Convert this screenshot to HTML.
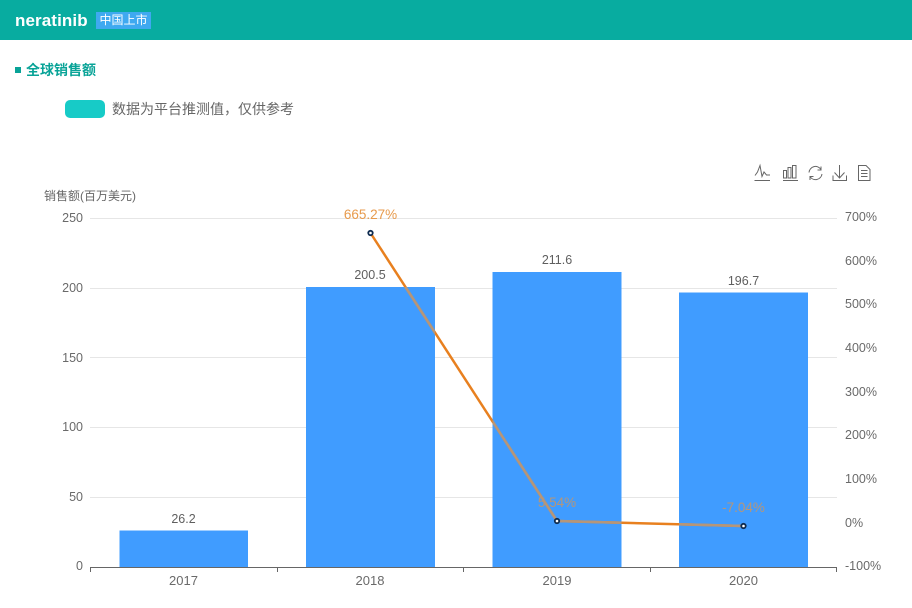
<!DOCTYPE html>
<html lang="zh"><head><meta charset="utf-8"><style>
html,body{margin:0;padding:0;background:#fff}
body{width:912px;height:608px;position:relative;overflow:hidden;font-family:"Liberation Sans","Noto Sans CJK SC",sans-serif}
.hd{position:absolute;left:0;top:0;width:912px;height:40px;background:#08aca0}
.nm{position:absolute;left:15px;top:11px;font-size:17px;line-height:19px;font-weight:700;color:#fff;letter-spacing:.1px}
.tag{position:absolute;left:96px;top:12px;width:55px;height:17px;background:#3fa9f0;color:#fff;font-size:12px;line-height:17px;text-align:center}
.sq{position:absolute;left:15px;top:67px;width:6px;height:6px;background:#08a397}
.tt{position:absolute;left:26px;top:61px;font-size:14px;line-height:18px;font-weight:700;color:#08a397}
.pill{position:absolute;left:65px;top:100px;width:40px;height:18px;border-radius:5px;background:#17cbc7}
.nt{position:absolute;left:112px;top:100px;font-size:14px;line-height:18px;color:#666}
svg{position:absolute;left:0;top:0}
svg text{font-family:"Liberation Sans","Noto Sans CJK SC",sans-serif}
</style></head><body>
<div class="hd"></div><div class="nm">neratinib</div><div class="tag">中国上市</div>
<div class="sq"></div><div class="tt">全球销售额</div>
<div class="pill"></div><div class="nt">数据为平台推测值，仅供参考</div>
<svg width="912" height="608" viewBox="0 0 912 608">
<defs><clipPath id="b"><rect x="119.5" y="530.5" width="128.5" height="37"/><rect x="306" y="287" width="129" height="281"/><rect x="492.5" y="272" width="129" height="296"/><rect x="679" y="292.5" width="129" height="275"/></clipPath></defs>
<g stroke="#e6e6e6" stroke-width="1">
<path d="M90 218.5H837M90 288.5H837M90 357.500H837M90 427.500H837M90 497.500H837"/></g>
<g fill="#409cff"><rect x="119.5" y="530.5" width="128.5" height="37"/><rect x="306" y="287" width="129" height="281"/><rect x="492.5" y="272" width="129" height="296"/><rect x="679" y="292.5" width="129" height="275"/></g>
<path d="M90 567.5H837M90.5 567.5V572M277.5 567.5V572M463.5 567.5V572M650.5 567.5V572M836.5 567.5V572" stroke="#666" fill="none"/>
<polyline points="370.5,233 557,521 743.5,526" fill="none" stroke="#e8801f" stroke-width="2.5"/>
<polyline points="370.5,233 557,521 743.5,526" fill="none" stroke="#b5967a" stroke-width="2.5" clip-path="url(#b)"/>
<g fill="#fff" stroke="#0f2c50" stroke-width="1.8"><circle cx="370.5" cy="233" r="2.2"/><circle cx="557" cy="521" r="2.2"/><circle cx="743.5" cy="526" r="2.2"/></g>
<g font-size="12.5" fill="#6a6a6a" text-anchor="end">
<text x="83" y="222">250</text><text x="83" y="292">200</text><text x="83" y="362">150</text><text x="83" y="431">100</text><text x="83" y="501">50</text><text x="83" y="570">0</text>
</g>
<g font-size="12.5" fill="#6a6a6a">
<text x="845" y="221">700%</text><text x="845" y="265">600%</text><text x="845" y="308">500%</text><text x="845" y="352">400%</text><text x="845" y="396">300%</text><text x="845" y="439">200%</text><text x="845" y="483">100%</text><text x="845" y="527">0%</text><text x="845" y="570">-100%</text>
</g>
<text x="44" y="200" font-size="12" fill="#666">销售额(百万美元)</text>
<g font-size="13" fill="#6a6a6a" text-anchor="middle"><text x="183.5" y="585">2017</text><text x="370" y="585">2018</text><text x="557" y="585">2019</text><text x="743.5" y="585">2020</text></g>
<g font-size="12.5" fill="#5f5f5f" text-anchor="middle"><text x="183.5" y="523">26.2</text><text x="370" y="279">200.5</text><text x="557" y="264">211.6</text><text x="743.5" y="285">196.7</text></g>
<text x="370.5" y="219" font-size="13.5" fill="#e79a4c" text-anchor="middle">665.27%</text>
<text x="557" y="507" font-size="13.5" fill="#b5967a" text-anchor="middle">5.54%</text>
<text x="743.5" y="512" font-size="13.5" fill="#b5967a" text-anchor="middle">-7.04%</text>
<g fill="none" stroke="#666" stroke-width="1">
<path d="M754.5 180.5H770M755 175.5L757.500 172L760 165.500L762 176.500L764 172L766.500 175H770"/>
<path d="M783 180.5H798M783.500 170.500h3v7.500h-3zM788 167.500h3v10.500h-3zM792.500 165.500h3.500v12.500h-3.500z"/>
<path d="M809 172.500A6.500 6.500 0 0 1 821 169.500M822 174A6.500 6.500 0 0 1 810 176.500M821 166.500V170H817.500M810 180V176.500H813.500"/>
<path d="M839.500 165V178M834.500 172.500L839.500 178L844.500 172.500M833 175.500V180.500H846.500V175.500"/>
<path d="M858.500 165.500H866L870 169.500V180.500H858.500ZM861 170.500H867.500M861 173.500H867.500M861 176.500H867.500"/>
</g>
</svg>
</body></html>
